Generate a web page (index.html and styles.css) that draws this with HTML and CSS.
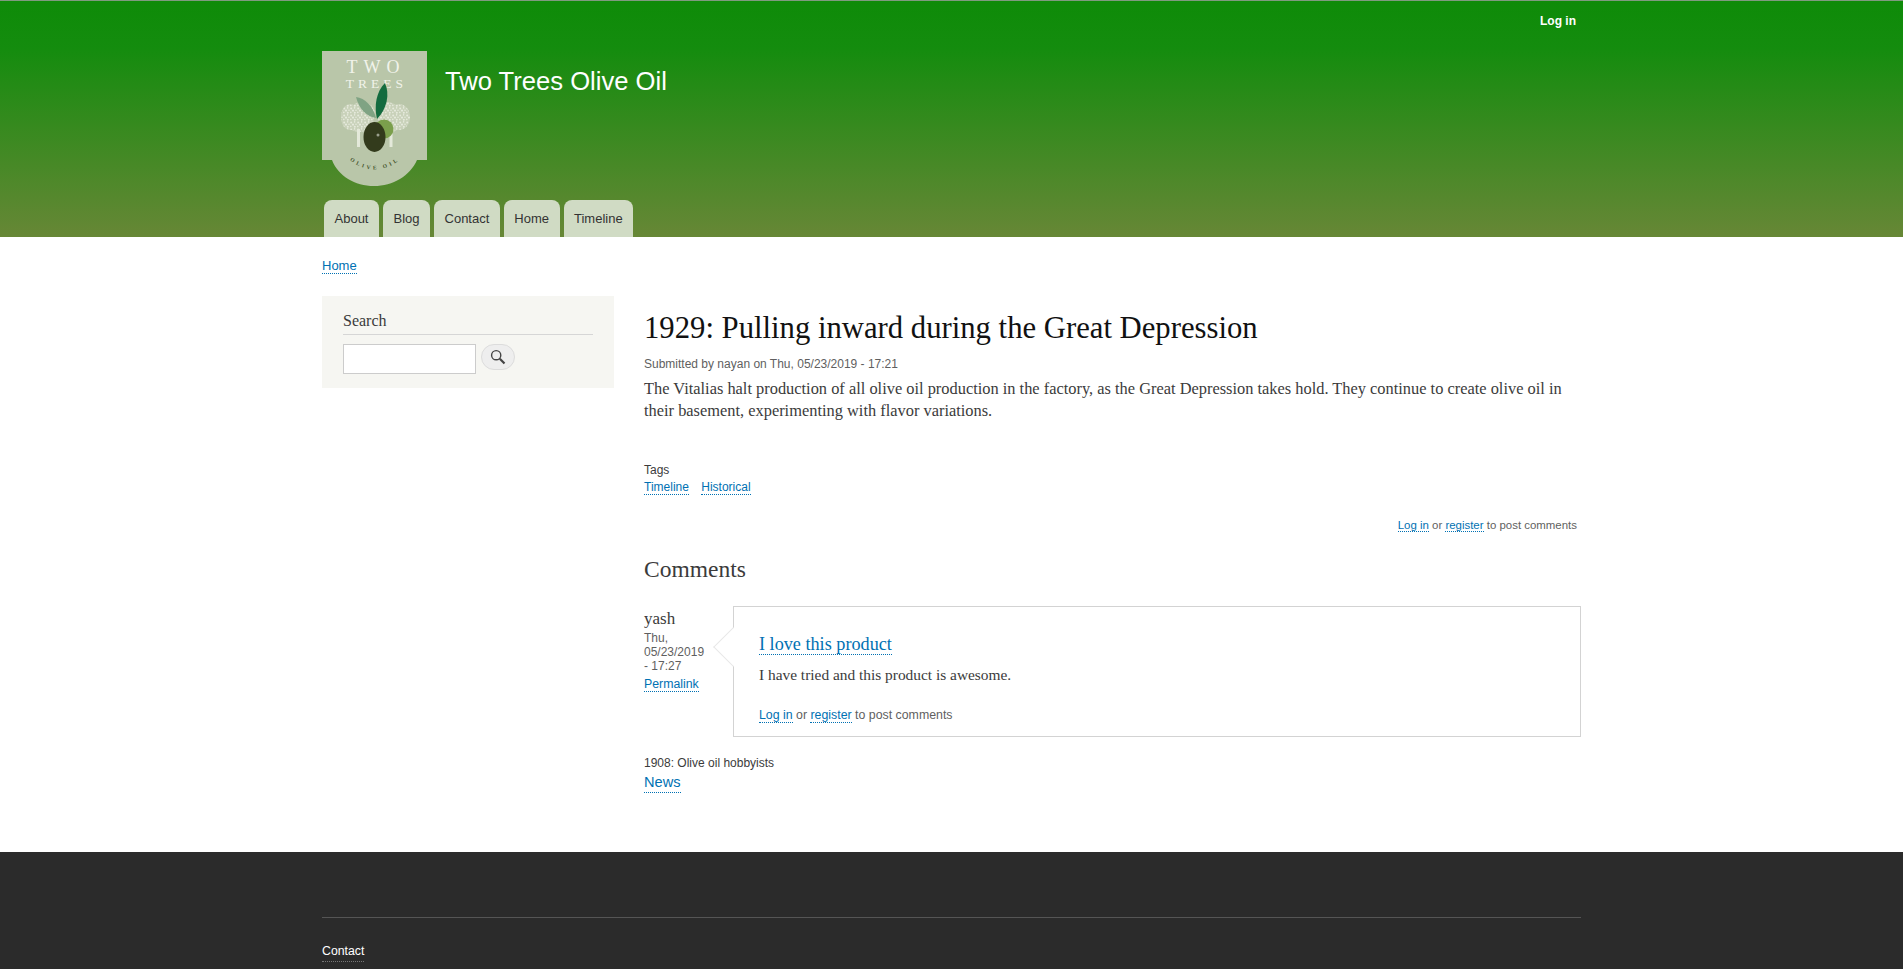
FILE: index.html
```html
<!DOCTYPE html>
<html>
<head>
    <title>1929: Pulling inward during the Great Depression | Two Trees Olive Oil</title>
    <link rel="stylesheet" href="styles.css">
</head>
<body>
    <header class="header">
        <div class="wrap">
            <div class="secondary-menu"><a href="#">Log in</a></div>
            <div class="branding">
                <svg class="logo" width="105" height="135" viewBox="0 0 105 135">
                    <defs>
                        <pattern id="leaves" width="7" height="7" patternUnits="userSpaceOnUse">
                            <rect width="7" height="7" fill="#c8d1b9"/>
                            <circle cx="1.2" cy="1.4" r="1" fill="#e6eadc"/>
                            <circle cx="4.6" cy="0.9" r="0.8" fill="#e6eadc"/>
                            <circle cx="3" cy="3.6" r="1.1" fill="#e6eadc"/>
                            <circle cx="6" cy="3.2" r="0.8" fill="#e6eadc"/>
                            <circle cx="0.8" cy="5.4" r="0.8" fill="#e6eadc"/>
                            <circle cx="4.8" cy="5.8" r="1" fill="#e6eadc"/>
                        </pattern>
                    </defs>
                    <path d="M0 0H105V109H95C88 125 71 135 52 135S16 125 10 109H0Z" fill="#b9c6a9"/>
                    <text x="54" y="22" class="logo-two" text-anchor="middle">TWO</text>
                    <text x="54.5" y="36.5" class="logo-trees" text-anchor="middle">TREES</text>
                    <g fill="url(#leaves)">
                        <ellipse cx="28" cy="66" rx="9" ry="13"/>
                        <ellipse cx="40" cy="63" rx="13" ry="12"/>
                        <ellipse cx="38" cy="72" rx="14" ry="9"/>
                        <ellipse cx="77" cy="66" rx="11" ry="13"/>
                        <ellipse cx="66" cy="63" rx="11" ry="12"/>
                        <ellipse cx="68" cy="72" rx="12" ry="9"/>
                    </g>
                    <rect x="35" y="78" width="3" height="18" fill="#e4e9da"/>
                    <rect x="67.5" y="78" width="3" height="18" fill="#e4e9da"/>
                    <path d="M34 46C43 47 51 55 54 67C45 66 37 58 34 46Z" fill="#7fa383"/>
                    <path d="M63 32C68 43 65 58 55 68C52 55 54 41 63 32Z" fill="#136b3f"/>
                    <circle cx="62" cy="78" r="9.5" fill="#7b9f4c"/>
                    <ellipse cx="52.5" cy="86" rx="11" ry="15" fill="#333b1c"/>
                    <circle cx="56" cy="84" r="1.5" fill="#9a9f8c"/>
                    <path id="oil-arc" d="M22 104Q52 133 84 104" fill="none"/>
                    <text class="logo-oil" text-anchor="middle"><textPath href="#oil-arc" startOffset="50%">OLIVE OIL</textPath></text>
                </svg>
                <div class="site-name">Two Trees Olive Oil</div>
            </div>
            <nav class="main-menu">
                <a href="#">About</a>
                <a href="#">Blog</a>
                <a href="#">Contact</a>
                <a href="#">Home</a>
                <a href="#">Timeline</a>
            </nav>
        </div>
    </header>

    <div class="wrap main">
        <div class="breadcrumb"><a class="link" href="#">Home</a></div>
        <div class="columns">
            <aside class="sidebar">
                <h2>Search</h2>
                <form class="search">
                    <input type="text">
                    <button type="button" aria-label="Search">
                        <svg width="16" height="16" viewBox="0 0 16 16">
                            <circle cx="6.2" cy="6.2" r="4.6" fill="none" stroke="#444" stroke-width="1.4"/>
                            <path d="M9.8 9.8L14.5 14.5" stroke="#444" stroke-width="2.2"/>
                        </svg>
                    </button>
                </form>
            </aside>

            <main class="content">
                <h1>1929: Pulling inward during the Great Depression</h1>
                <div class="submitted">Submitted by nayan on Thu, 05/23/2019 - 17:21</div>
                <p class="body-text">The Vitalias halt production of all olive oil production in the factory, as the Great Depression takes hold. They continue to create olive oil in their basement, experimenting with flavor variations.</p>

                <div class="tags">
                    <div class="tags-label">Tags</div>
                    <a class="link" href="#">Timeline</a>
                    <a class="link" href="#">Historical</a>
                </div>

                <div class="node-links"><a class="link" href="#">Log in</a> or <a class="link" href="#">register</a> to post comments</div>

                <h2 class="comments-title">Comments</h2>
                <div class="comment">
                    <div class="comment-meta">
                        <div class="author">yash</div>
                        <div class="date">Thu, 05/23/2019 - 17:27</div>
                        <a class="link" href="#">Permalink</a>
                    </div>
                    <div class="comment-box">
                        <h3><a class="link" href="#">I love this product</a></h3>
                        <p>I have tried and this product is awesome.</p>
                        <div class="comment-links"><a class="link" href="#">Log in</a> or <a class="link" href="#">register</a> to post comments</div>
                    </div>
                </div>

                <div class="prev-title">1908: Olive oil hobbyists</div>
                <a class="link news" href="#">News</a>
            </main>
        </div>
    </div>

    <footer class="footer">
        <div class="wrap">
            <div class="footer-menu"><a href="#">Contact</a></div>
        </div>
    </footer>
</body>
</html>
```

FILE: styles.css
```css
html {
    background-color: #2b2b2b;
}

body {
    margin: 0;
    font-family: "Liberation Sans", Arial, sans-serif;
    font-size: 14px;
    color: #3b3b3b;
    background-color: #fff;
}

.wrap {
    width: 1259px;
    margin: 0 auto;
}

.link {
    color: #0071b3;
    text-decoration: none;
    border-bottom: 1px dotted #0071b3;
}

/* header */
.header {
    height: 237px;
    box-sizing: border-box;
    border-top: 1px solid #7f9a7f;
    background: linear-gradient(to bottom, #0e8b08 0%, #148c0e 20%, #678736 100%);
}

.secondary-menu {
    height: 50px;
    padding-top: 13px;
    box-sizing: border-box;
    text-align: right;
    font-size: 12px;
    font-weight: bold;
}

.secondary-menu a {
    color: #fff;
    text-decoration: none;
    margin-right: 5px;
}

.branding {
    display: flex;
    height: 149px;
}

.logo {
    flex: none;
}

.logo-two {
    font-family: "Liberation Serif", serif;
    font-size: 18px;
    letter-spacing: 6px;
    fill: #f1f3ea;
}

.logo-trees {
    font-family: "Liberation Serif", serif;
    font-size: 13.5px;
    letter-spacing: 4px;
    fill: #f1f3ea;
}

.logo-oil {
    font-family: "Liberation Serif", serif;
    font-size: 5.5px;
    font-weight: bold;
    letter-spacing: 2.8px;
    fill: #44532b;
}

.site-name {
    margin: 15px 0 0 18px;
    font-size: 25.6px;
    line-height: 30px;
    color: #fff;
}

.main-menu {
    display: flex;
    gap: 4px;
    padding-left: 2px;
}

.main-menu a {
    height: 37px;
    padding: 0 10.5px;
    line-height: 37px;
    font-size: 13px;
    color: #333;
    text-decoration: none;
    background-color: #d0dbc4;
    border-radius: 8px 8px 0 0;
}

/* content */
.main {
    padding-bottom: 59px;
}

.breadcrumb {
    padding-top: 20px;
    height: 59px;
    box-sizing: border-box;
    font-size: 13px;
    line-height: 17px;
}

.columns {
    display: flex;
}

.sidebar {
    flex: none;
    width: 292px;
    height: 92px;
    padding: 14px 21px 0;
    box-sizing: border-box;
    background-color: #f6f6f2;
}

.sidebar h2 {
    margin: 0;
    padding-bottom: 3px;
    font-family: "Liberation Serif", serif;
    font-weight: normal;
    font-size: 16px;
    line-height: 21px;
    color: #3b3b3b;
    border-bottom: 1px solid #d6d6d6;
}

.search {
    display: flex;
    align-items: flex-start;
    gap: 5px;
    margin-top: 9px;
}

.search input {
    width: 133px;
    height: 30px;
    padding: 0;
    box-sizing: border-box;
    border: 1px solid #ccc;
    background-color: #fff;
}

.search button {
    display: flex;
    align-items: center;
    justify-content: center;
    width: 34px;
    height: 26px;
    padding: 0;
    border: 1px solid #dcdcdc;
    border-radius: 13px;
    background-color: #eee;
}

.content {
    flex: none;
    width: 937px;
    margin-left: 30px;
    box-sizing: border-box;
}

h1 {
    margin: 14px 0 0;
    font-family: "Liberation Serif", serif;
    font-weight: normal;
    font-size: 30.7px;
    line-height: 36px;
    color: #111;
}

.submitted {
    margin-top: 10px;
    font-size: 12px;
    line-height: 16px;
    color: #5f5f5f;
}

.body-text {
    margin: 6px 0 0;
    font-family: "Liberation Serif", serif;
    font-size: 16.4px;
    line-height: 22px;
}

.tags {
    margin-top: 39px;
    font-size: 12px;
    line-height: 17px;
}

.tags-label {
    line-height: 18px;
}

.tags .link {
    margin-right: 9px;
}

.node-links {
    margin-top: 21px;
    padding-right: 4px;
    text-align: right;
    font-size: 11.45px;
    line-height: 16px;
    color: #5f5f5f;
}

.comments-title {
    margin: 23px 0 0;
    font-family: "Liberation Serif", serif;
    font-weight: normal;
    font-size: 23.5px;
    line-height: 26px;
}

.comment {
    display: flex;
    margin-top: 24px;
}

.comment-meta {
    flex: none;
    width: 89px;
    padding-top: 3px;
    box-sizing: border-box;
    font-size: 12px;
}

.author {
    font-family: "Liberation Serif", serif;
    font-size: 17px;
    line-height: 20px;
}

.date {
    width: 62px;
    margin-top: 2px;
    line-height: 14px;
    color: #5f5f5f;
}

.comment-meta .link {
    display: inline-block;
    margin-top: 4px;
    font-size: 12.3px;
    line-height: 14px;
}

.comment-box {
    position: relative;
    width: 848px;
    height: 131px;
    padding: 26px 25px 0;
    box-sizing: border-box;
    border: 1px solid #d3d3d3;
}

/* little arrow on the left of the comment */
.comment-box::before {
    content: "";
    position: absolute;
    top: 26px;
    left: -15px;
    width: 28px;
    height: 28px;
    box-sizing: border-box;
    transform: rotate(45deg);
    background-color: #fff;
    border-left: 1px solid #e8e8e8;
    border-bottom: 1px solid #e8e8e8;
}

.comment-box h3 {
    position: relative;
    margin: 0;
    font-family: "Liberation Serif", serif;
    font-weight: normal;
    font-size: 18.2px;
    line-height: 22px;
}

.comment-box p {
    position: relative;
    margin: 10px 0 0;
    font-family: "Liberation Serif", serif;
    font-size: 15.4px;
    line-height: 20px;
}

.comment-links {
    margin-top: 22px;
    font-size: 12.35px;
    line-height: 16px;
    color: #5f5f5f;
}

.prev-title {
    margin-top: 18px;
    font-size: 12px;
    line-height: 16px;
}

.news {
    display: inline-block;
    margin-top: 2px;
    font-size: 14.6px;
    line-height: 19px;
}

/* footer */
.footer {
    height: 116px;
    padding-top: 65px;
    box-sizing: border-box;
    background-color: #2b2b2b;
}

.footer-menu {
    padding-top: 26px;
    border-top: 1px solid #555;
    font-size: 12.3px;
}

.footer-menu a {
    padding-bottom: 3px;
    color: #fff;
    text-decoration: none;
    border-bottom: 1px dotted #777;
}
```
